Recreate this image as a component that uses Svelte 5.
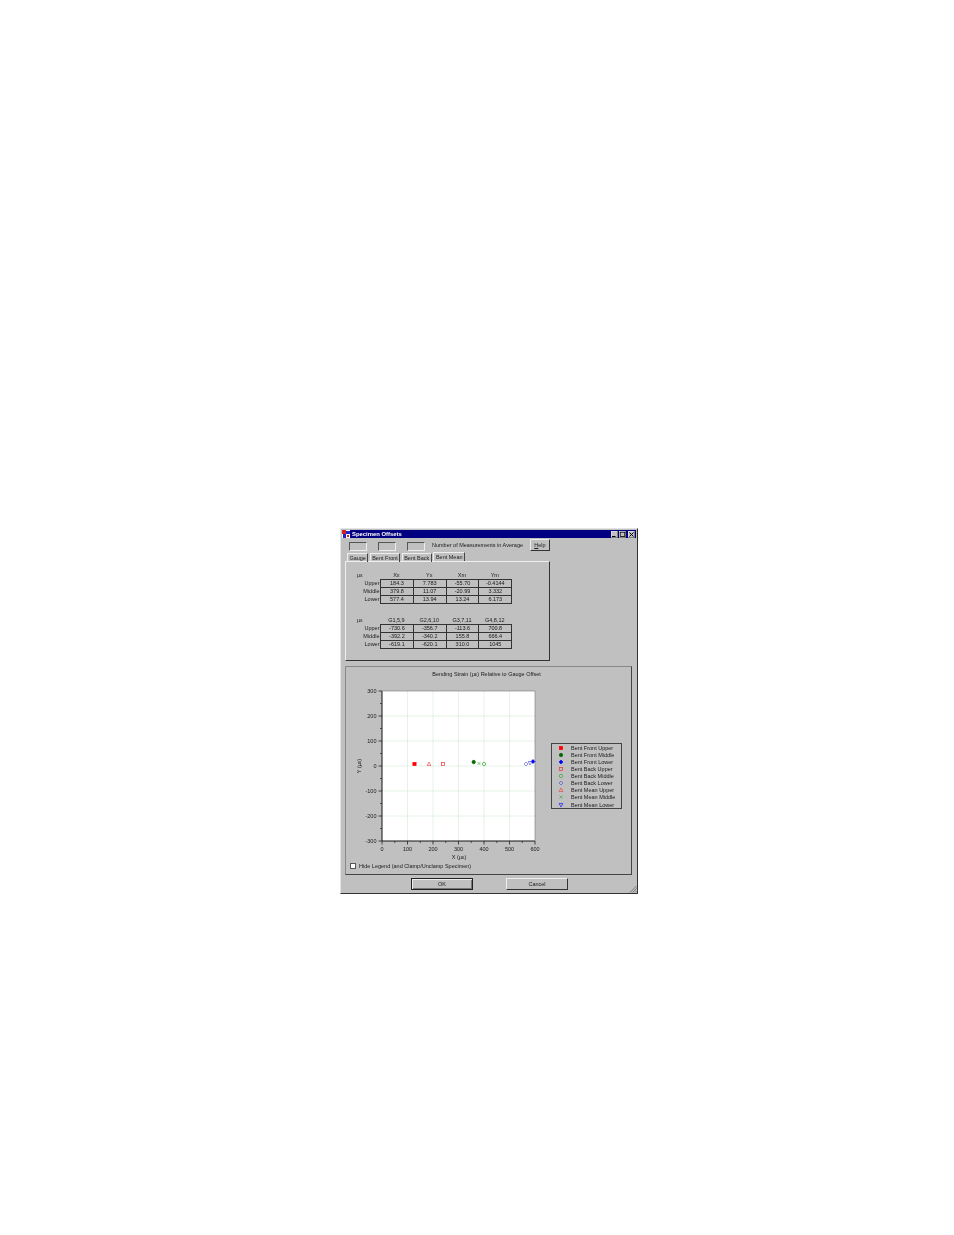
<script>
  const offsets = [
    { head: ['Xx', 'Yx', 'Xm', 'Ym'], rows: [
      ['Upper', '184.3', '7.783', '-55.70', '-0.4144'],
      ['Middle', '379.8', '11.07', '-20.99', '3.332'],
      ['Lower', '577.4', '13.94', '13.24', '6.173']
    ] },
    { head: ['G1,5,9', 'G2,6,10', 'G3,7,11', 'G4,8,12'], rows: [
      ['Upper', '-730.6', '-356.7', '-113.6', '700.8'],
      ['Middle', '-392.2', '-340.2', '155.8', '666.4'],
      ['Lower', '-619.1', '-620.1', '310.0', '1045']
    ] }
  ];

  const tabs = ['Gauge', 'Bent Front', 'Bent Back', 'Bent Mean'];

  const legend = [
    ['Bent Front Upper', 'square', '#f00', true],
    ['Bent Front Middle', 'circle', '#060', true],
    ['Bent Front Lower', 'diamond', '#00f', true],
    ['Bent Back Upper', 'square', '#e33', false],
    ['Bent Back Middle', 'circle', '#3a3', false],
    ['Bent Back Lower', 'diamond', '#44d', false],
    ['Bent Mean Upper', 'triangle', '#e33', false],
    ['Bent Mean Middle', 'cross', '#3a3', false],
    ['Bent Mean Lower', 'down', '#00f', false]
  ];

  const points = [
    [414.5, 764, 'square', '#f00', true],
    [473.7, 762, 'circle', '#060', true],
    [533, 761.5, 'diamond', '#00f', true],
    [443, 764, 'square', '#e33', false],
    [484, 764, 'circle', '#3a3', false],
    [526, 764, 'diamond', '#44d', false],
    [429, 764, 'triangle', '#e33', false],
    [479, 763.5, 'cross', '#3a3', false],
    [530, 763, 'down', '#44d', false]
  ];

  const xTicks = [0, 100, 200, 300, 400, 500, 600];
  const yTicks = [300, 200, 100, 0, -100, -200, -300];
  const px = (v) => 382 + (v / 600) * 153;
  const py = (v) => 766 - (v / 300) * 75;
</script>

{#snippet marker(x, y, shape, color, filled)}
  {#if shape === 'square'}
    <rect x={x - 1.6} y={y - 1.6} width="3.2" height="3.2" fill={filled ? color : 'none'} stroke={color} stroke-width="0.7" />
  {:else if shape === 'circle'}
    <circle cx={x} cy={y} r="1.7" fill={filled ? color : 'none'} stroke={color} stroke-width="0.7" />
  {:else if shape === 'diamond'}
    <path d="M{x} {y - 2}L{x + 2} {y}L{x} {y + 2}L{x - 2} {y}Z" fill={filled ? color : 'none'} stroke={color} stroke-width="0.6" />
  {:else if shape === 'triangle'}
    <path d="M{x} {y - 2}L{x + 1.9} {y + 1.5}L{x - 1.9} {y + 1.5}Z" fill="none" stroke={color} stroke-width="0.6" />
  {:else if shape === 'down'}
    <path d="M{x} {y + 2}L{x + 1.9} {y - 1.5}L{x - 1.9} {y - 1.5}Z" fill="none" stroke={color} stroke-width="0.6" />
  {:else}
    <path d="M{x - 1.5} {y - 1.5}L{x + 1.5} {y + 1.5}M{x + 1.5} {y - 1.5}L{x - 1.5} {y + 1.5}" stroke={color} stroke-width="0.6" />
  {/if}
{/snippet}

<div class="page">
  <div class="window">
    <div class="titlebar">
      <svg class="appicon" viewBox="0 0 8 8" width="8" height="8">
        <rect width="8" height="8" fill="#fff" />
        <rect x="0" y="0" width="4" height="4" fill="#c22" />
        <rect x="4" y="1" width="4" height="3" fill="#22c" />
        <rect x="1" y="4" width="3" height="4" fill="#22c" />
        <rect x="5" y="5" width="2" height="2" fill="#c22" />
      </svg>
      <span class="title">Specimen Offsets</span>
      <span class="winbtn">
        <svg viewBox="0 0 7 7" width="7" height="7"><path d="M1 5.5H4.5" stroke="#000" /></svg>
      </span>
      <span class="winbtn">
        <svg viewBox="0 0 7 7" width="7" height="7"><rect x="1.2" y="1.2" width="4.6" height="4.2" fill="none" stroke="#000" stroke-width="0.8" /></svg>
      </span>
      <span class="winbtn close">
        <svg viewBox="0 0 7 7" width="7" height="7"><path d="M1.5 1.5L5.5 5.5M5.5 1.5L1.5 5.5" stroke="#000" /></svg>
      </span>
    </div>

    <div class="toprow">
      <span class="box"></span>
      <span class="box"></span>
      <span class="box"></span>
      <span class="count">Number of Measurements in Average</span>
      <span class="btn help"><u>H</u>elp</span>
    </div>

    <div class="tabs">
      {#each tabs as tab}
        <span class="tab" class:active={tab === 'Bent Mean'}>{tab}</span>
      {/each}
    </div>

    <div class="panel">
      {#each offsets as table}
        <div class="grid">
          <span class="unit">µε</span>
          {#each table.head as h}
            <span class="head">{h}</span>
          {/each}
          {#each table.rows as row}
            <span class="rowlabel">{row[0]}</span>
            {#each row.slice(1) as cell}
              <span class="cell">{cell}</span>
            {/each}
          {/each}
        </div>
      {/each}
    </div>

    <div class="group">
      <div class="charttitle">Bending Strain (µε) Relative to Gauge Offset</div>
      <div class="chartrow">
        <svg class="plot" viewBox="355 684 190 176" width="190" height="176">
          <rect x="382" y="691" width="153" height="150" fill="#fff" />
          {#each xTicks.slice(1, -1) as t}
            <line x1={px(t)} x2={px(t)} y1="691" y2="841" stroke="#c6e4c6" stroke-width="0.7" stroke-dasharray="1 0.6" />
          {/each}
          {#each yTicks.slice(1, -1) as t}
            <line x1="382" x2="535" y1={py(t)} y2={py(t)} stroke="#c6e4c6" stroke-width="0.7" stroke-dasharray="1 0.6" />
          {/each}

          <path d="M382 691V841H535" fill="none" stroke="#111" stroke-width="1" />
          <path d="M382 691H535V841" fill="none" stroke="#777" stroke-width="0.6" />

          {#each yTicks as t}
            <line x1="378.5" x2="382" y1={py(t)} y2={py(t)} stroke="#222" stroke-width="0.8" />
            <text class="tick" x="376.5" y={py(t) + 1.9} text-anchor="end">{t}</text>
          {/each}
          {#each [250, 150, 50, -50, -150, -250] as t}
            <line x1="380" x2="382" y1={py(t)} y2={py(t)} stroke="#222" stroke-width="0.7" />
          {/each}
          {#each xTicks as t}
            <line x1={px(t)} x2={px(t)} y1="841" y2="844.5" stroke="#222" stroke-width="0.8" />
            <text class="tick" x={px(t)} y="851" text-anchor="middle">{t}</text>
          {/each}
          {#each [50, 150, 250, 350, 450, 550] as t}
            <line x1={px(t)} x2={px(t)} y1="841" y2="843" stroke="#222" stroke-width="0.7" />
          {/each}

          <text class="tick" x="459" y="858.5" text-anchor="middle">X (µε)</text>
          <text class="tick" transform="translate(360.5 766) rotate(-90)" text-anchor="middle">Y (µε)</text>

          {#each points as p}
            {@render marker(p[0], p[1], p[2], p[3], p[4])}
          {/each}
        </svg>

        <div class="legend">
          {#each legend as item}
            <div class="legendrow">
              <svg viewBox="0 0 6 6" width="6" height="6">
                {@render marker(3, 3, item[1], item[2], item[3])}
              </svg>
              <span>{item[0]}</span>
            </div>
          {/each}
        </div>
      </div>
      <div class="hide">
        <span class="check"></span>
        <span>Hide Legend (and Clamp/Unclamp Specimen)</span>
      </div>
    </div>

    <div class="actions">
      <span class="btn ok">OK</span>
      <span class="btn cancel">Cancel</span>
    </div>

    <svg class="grip" viewBox="0 0 8 8" width="8" height="8">
      <path d="M7.5 1L1 7.5M7.5 3.5L3.5 7.5M7.5 6L6 7.5" stroke="#666" stroke-width="0.8" />
    </svg>
  </div>
</div>

<style>
  :global(body) {
    margin: 0;
    background: #fff;
  }

  .page {
    height: 1235px;
    padding: 528px 0 0 340px;
    box-sizing: border-box;
    font-family: "Liberation Sans", Arial, sans-serif;
    font-size: 5.5px;
    color: #1a1a1a;
  }

  .window {
    position: relative;
    width: 298px;
    height: 366px;
    box-sizing: border-box;
    background: #c0c0c0;
    border: 1px solid;
    border-color: #e4e4e4 #333 #333 #e4e4e4;
    padding: 1px 1px 0;
    filter: blur(0.35px);
  }

  .titlebar {
    display: flex;
    align-items: center;
    gap: 1px;
    height: 8px;
    padding-right: 1px;
    background: #000080;
    color: #fff;
  }

  .appicon {
    margin-right: 1px;
  }

  .title {
    flex: 1;
    font-weight: bold;
    font-size: 5.9px;
  }

  .winbtn {
    display: flex;
    width: 7px;
    height: 7px;
    background: #c0c0c0;
    box-shadow: inset -0.5px -0.5px 0 #444, inset 0.5px 0.5px 0 #eee;
  }

  .close {
    margin-left: 1px;
  }

  .toprow {
    display: flex;
    align-items: flex-start;
    height: 12px;
    margin-top: 1px;
    padding-left: 7px;
  }

  .box {
    width: 16px;
    height: 7px;
    margin: 3px 11px 0 0;
    border: 1px solid #555;
    border-color: #555 #eee #eee #555;
  }

  .box:nth-child(3) {
    margin-right: 7px;
  }

  .count {
    margin: 3px 6px 0 0;
    width: 92px;
    white-space: nowrap;
  }

  .btn {
    display: flex;
    align-items: center;
    justify-content: center;
    box-sizing: border-box;
    border: 1px solid;
    border-color: #eee #333 #333 #eee;
  }

  .help {
    width: 20px;
    height: 12px;
  }

  .tabs {
    display: flex;
    gap: 1.5px;
    height: 9px;
    padding-left: 5px;
    margin-top: 1px;
  }

  .tab {
    display: flex;
    align-items: center;
    padding: 0 1.4px;
    height: 9px;
    box-sizing: border-box;
    white-space: nowrap;
    border-right: 1px solid #444;
    border-left: 1px solid #eee;
    border-top: 1px solid #eee;
    margin-top: 1px;
  }

  .active {
    height: 9px;
    margin-top: 0;
    position: relative;
    z-index: 1;
    padding: 0 1.8px;
    background: #c0c0c0;
  }

  .panel {
    display: flex;
    flex-direction: column;
    gap: 13px;
    width: 205px;
    height: 100px;
    box-sizing: border-box;
    margin-left: 3px;
    padding: 9px 0 0 1px;
    border: 1px solid;
    border-color: #eee #333 #333 #eee;
  }

  .grid {
    display: grid;
    grid-template-columns: 33px repeat(4, 32.8px);
    grid-auto-rows: 8px;
    width: 165px;
  }

  .unit {
    padding-left: 10px;
    line-height: 8px;
  }

  .head {
    text-align: center;
    line-height: 8px;
  }

  .rowlabel {
    text-align: right;
    padding-right: 0.5px;
    line-height: 8px;
  }

  .cell {
    text-align: center;
    line-height: 7px;
    height: 9px;
    box-sizing: border-box;
    border: 1px solid #333;
    margin-right: -1px;
    background: #c0c0c0;
  }

  .group {
    width: 287px;
    height: 209px;
    box-sizing: border-box;
    margin: 5px 0 0 3px;
    padding-top: 3px;
    border: 1px solid;
    border-color: #888 #444 #444 #888;
  }

  .charttitle {
    text-align: center;
    line-height: 8px;
    width: 281px;
  }

  .chartrow {
    display: flex;
    align-items: flex-start;
    margin: 6px 0 0 9px;
    height: 176px;
  }

  .plot {
    display: block;
    flex: none;
  }

  .tick {
    font-family: "Liberation Sans", Arial, sans-serif;
    font-size: 5.5px;
    fill: #1a1a1a;
  }

  .legend {
    display: flex;
    flex-direction: column;
    width: 71px;
    height: 66px;
    box-sizing: border-box;
    margin: 59px 0 0 6px;
    padding-top: 0.5px;
    border: 1px solid #444;
    background: #c0c0c0;
  }

  .legendrow {
    display: flex;
    align-items: center;
    gap: 7px;
    height: 7.15px;
    padding-left: 6px;
    white-space: nowrap;
  }

  .hide {
    display: flex;
    align-items: center;
    gap: 3px;
    margin: 3px 0 0 4px;
  }

  .check {
    width: 6px;
    height: 6px;
    box-sizing: border-box;
    background: #fff;
    border: 1px solid #555;
  }

  .actions {
    display: flex;
    gap: 33px;
    margin: 3px 0 0 69px;
  }

  .ok,
  .cancel {
    width: 62px;
    height: 12px;
  }

  .ok {
    border: 1px solid #222;
    box-shadow: inset 1px 1px 0 #eee, inset -1px -1px 0 #777;
  }

  .grip {
    position: absolute;
    right: 0;
    bottom: 0;
  }
</style>
